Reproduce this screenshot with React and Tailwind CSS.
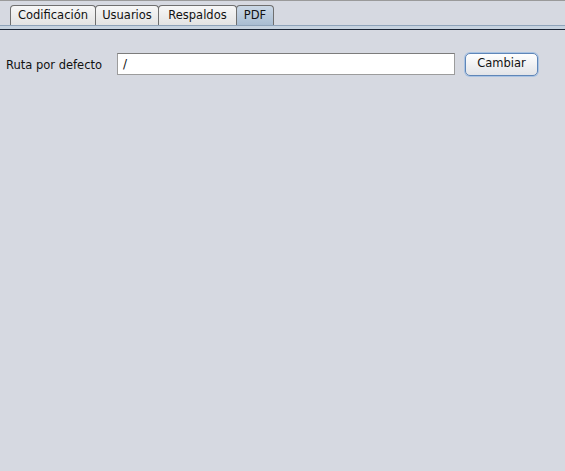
export default function App() {
  const tabs = [
    { name: "Codificación", w: "w-[86px]" },
    { name: "Usuarios", w: "w-[64px]" },
    { name: "Respaldos", w: "w-[79px]" },
    { name: "PDF", w: "w-[38px]", active: true },
  ];

  return (
    <div
      className="w-[565px] h-[471px] bg-[#d6d9e1] border-t border-[#9a9a9a] text-[#111]"
      style={{ fontFamily: '"DejaVu Sans", sans-serif' }}
    >
      {/* tab strip */}
      <div className="flex items-end h-[24px] pl-[10px]">
        {tabs.map((t, i) => (
          <div
            key={t.name}
            className={`${t.w} h-[20px] flex items-center justify-center text-[11.5px] border border-b-0 border-[#6f6f6f] rounded-t-[4px] ${i > 0 ? "-ml-px" : ""} ${
              t.active
                ? "bg-gradient-to-b from-[#cbd8e6] to-[#a9bdd2]"
                : "bg-gradient-to-b from-[#f7f7f7] to-[#e3e3e3]"
            }`}
          >
            {t.name}
          </div>
        ))}
      </div>
      <div className="h-px bg-[#8ea3ba]" />
      <div className="h-[3px] bg-[#c6d2df]" />
      <div className="h-px bg-[#1c2636]" />

      {/* content */}
      <div className="flex items-center mt-[22px] pl-[6px]">
        <span className="text-[11.5px] leading-[22px] w-[111px] pt-[2px]">Ruta por defecto</span>
        <div className="w-[338px] h-[22px] bg-white border border-[#9c9c9c] border-t-[#7c7c7c] flex items-center pl-[5px] text-[12px]">
          /
        </div>
        <button className="ml-[10px] w-[73px] h-[23px] rounded-[5px] border border-[#5f86b8] shadow-[0_0_0_1px_#a9c3e3] bg-gradient-to-b from-[#ffffff] to-[#e2e4e8] text-[11.5px] flex items-center justify-center">
          Cambiar
        </button>
      </div>
    </div>
  );
}
